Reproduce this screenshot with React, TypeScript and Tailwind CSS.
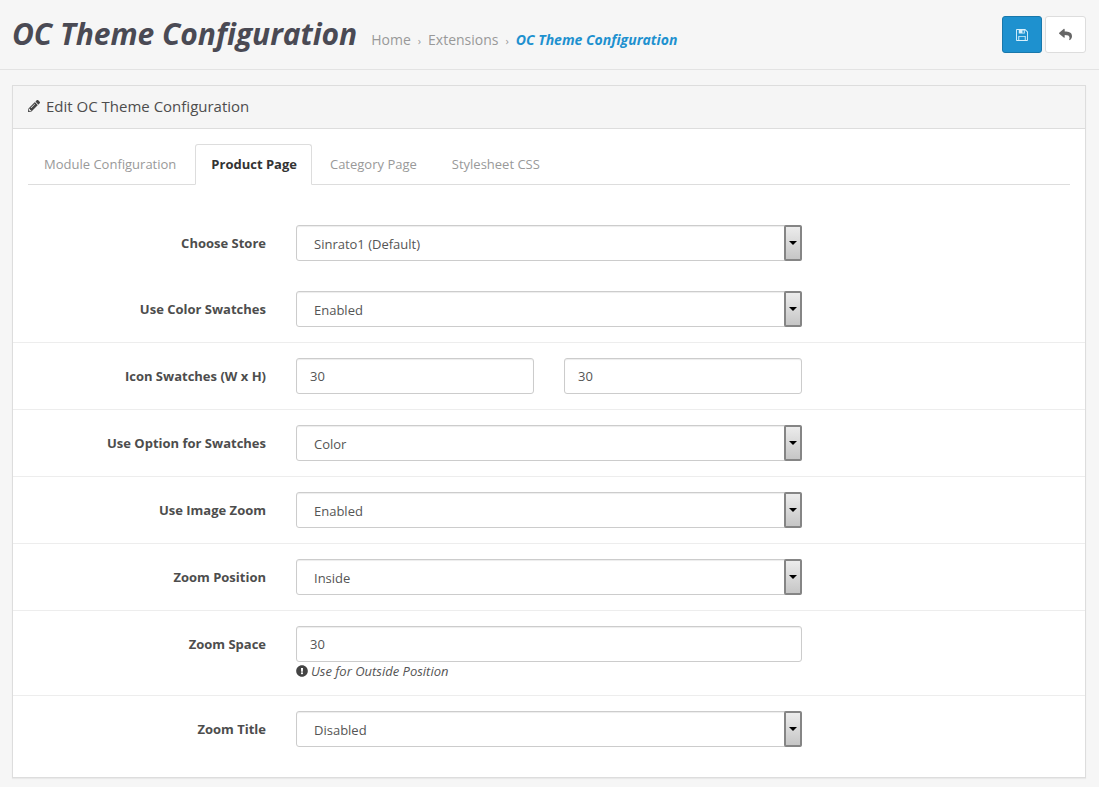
import { FaPencilAlt, FaReply, FaExclamationCircle } from "react-icons/fa";

const SelectBox = ({ value }: { value: string }) => (
  <div className="relative w-[506px] h-9">
    <select
      defaultValue={value}
      className="block w-full h-full appearance-none bg-white border border-[#ccc] rounded-[3px] pl-[17px] pr-5 pt-1 text-[13px] text-[#555] shadow-[inset_0_1px_1px_rgba(0,0,0,0.075)]"
    >
      <option>{value}</option>
    </select>
    {/* dropdown arrow button */}
    <div className="absolute right-0 top-0 w-[18px] h-9 border-2 border-[#858585] rounded-[2px] bg-gradient-to-b from-[#ececec] to-[#c6c6c6] flex items-center justify-center pointer-events-none">
      <div className="w-0 h-0 border-l-[4px] border-r-[4px] border-t-[4px] border-l-transparent border-r-transparent border-t-black" />
    </div>
  </div>
);

const TextBox = ({ value, width }: { value: string; width: string }) => (
  <input
    readOnly
    value={value}
    className={`block h-9 ${width} bg-white border border-[#ccc] rounded-[3px] px-[13px] text-[13px] text-[#555] shadow-[inset_0_1px_1px_rgba(0,0,0,0.075)]`}
  />
);

const Row = ({ label, line, children }: { label: string; line?: boolean; children: React.ReactNode }) => (
  <div className={`flex py-[15px] ${line ? "border-t border-[#ededed]" : ""}`}>
    <label className="w-[253px] text-right text-[13px] font-bold text-[#4d4d4d] pt-[9px] leading-[18px] shrink-0">{label}</label>
    <div className="ml-[30px]">{children}</div>
  </div>
);

export default function App() {
  return (
    <div className="min-h-[787px] h-[787px] overflow-hidden bg-[#f6f6f6] font-['Open_Sans',sans-serif]">
      {/* Header */}
      <div className="h-[70px] border-b border-[#e3e3e3] flex items-start justify-between pl-[12px] pr-[13px]">
        <div className="flex items-baseline pt-[14px]">
          <h1 className="text-[30px] leading-[40px] font-bold italic text-[#4a4a54] tracking-[-0.05px]">OC Theme Configuration</h1>
          <div className="ml-[14px] text-[14px] text-[#999] flex items-baseline">
            <span>Home</span>
            <span className="mx-[7px] text-[11px]">›</span>
            <span>Extensions</span>
            <span className="mx-[7px] text-[11px]">›</span>
            <span className="font-bold italic text-[#1e91cf]">OC Theme Configuration</span>
          </div>
        </div>
        <div className="flex gap-[3px] pt-[16px]">
          <button className="w-10 h-[37px] rounded-[3px] bg-[#1e91cf] border border-[#1978ab] flex items-center justify-center text-[#d8f0fc]">
            <svg viewBox="0 0 13 13" className="w-3 h-3" fill="currentColor" fillRule="evenodd">
              <path d="M1 0H10L13 3V12a1 1 0 0 1-1 1H1a1 1 0 0 1-1-1V1a1 1 0 0 1 1-1ZM1 1V12H2.5V7.5H10.5V12H12V3.5L9.5 1V5H3V1ZM3.5 8.5V12H9.5V8.5ZM7 1.5V4H8.5V1.5Z" />
            </svg>
          </button>
          <button className="w-[41px] h-[37px] rounded-[3px] bg-white border border-[#ddd] flex items-center justify-center text-[#666]">
            <FaReply className="w-[13px] h-[13px]" />
          </button>
        </div>
      </div>

      {/* Panel */}
      <div className="ml-[12px] mr-[13px] mt-[15px] border border-[#ddd] bg-white shadow-[0_1px_1px_rgba(0,0,0,0.05)]">
        <div className="h-[43px] bg-[#f5f5f5] border-b border-[#ddd] flex items-center pl-[15px] pb-[2px] text-[15px] text-[#4d4d4d]">
          <FaPencilAlt className="w-3 h-3 mr-[6px] text-[#444]" />
          Edit OC Theme Configuration
        </div>

        <div className="pt-[15px] pb-[15px]">
          {/* Tabs */}
          <div className="mx-[15px] h-[41px] border-b border-[#ddd] flex text-[13px] text-[#999]">
            <div className="px-[16px] pt-[11px]">Module Configuration</div>
            <div className="ml-[3px] h-[41px] pl-[15px] pr-[14px] pt-[10px] bg-white border border-[#ddd] border-b-white rounded-t-[3px] font-bold text-[#333]">Product Page</div>
            <div className="ml-[2px] px-[16px] pt-[11px]">Category Page</div>
            <div className="ml-[3px] px-[16px] pt-[11px]">Stylesheet CSS</div>
          </div>

          <div className="mt-[25px]">
            <Row label="Choose Store"><SelectBox value="Sinrato1 (Default)" /></Row>
            <Row label="Use Color Swatches"><SelectBox value="Enabled" /></Row>
            <Row label="Icon Swatches (W x H)" line>
              <div className="flex gap-[30px]">
                <TextBox value="30" width="w-[238px]" />
                <TextBox value="30" width="w-[238px]" />
              </div>
            </Row>
            <Row label="Use Option for Swatches" line><SelectBox value="Color" /></Row>
            <Row label="Use Image Zoom" line><SelectBox value="Enabled" /></Row>
            <Row label="Zoom Position" line><SelectBox value="Inside" /></Row>
            <Row label="Zoom Space" line>
              <TextBox value="30" width="w-[506px]" />
              <div className="flex items-center text-[13px] leading-[18px] italic text-[#555]">
                <FaExclamationCircle className="w-3 h-3 mr-[3px] text-[#444]" />
                Use for Outside Position
              </div>
            </Row>
            <Row label="Zoom Title" line><SelectBox value="Disabled" /></Row>
          </div>
        </div>
      </div>
    </div>
  );
}
